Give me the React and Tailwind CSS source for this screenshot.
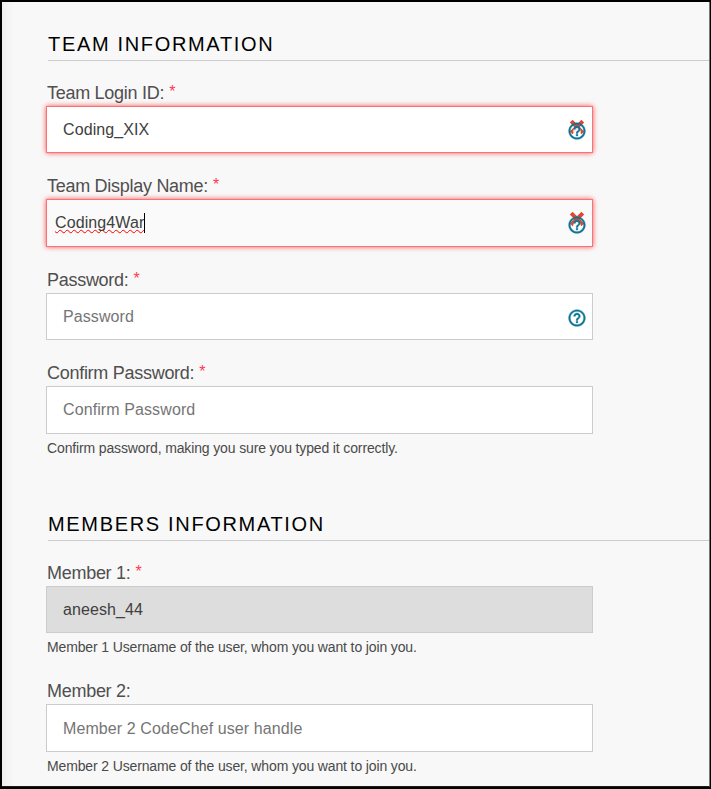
const HelpIcon = ({ className }) => (
  <svg viewBox="0 0 24 24" className={`absolute left-[520px] h-[20px] w-[20px] ${className}`}>
    <ellipse cx="12" cy="12.8" rx="4.6" ry="6" fill="#ffffff" fillOpacity="0.85" />
    <path
      fill="#0b7496"
      stroke="#0b7496"
      strokeWidth="0.5"
      d="M11 18h2v-2h-2v2zm1-16C6.48 2 2 6.48 2 12s4.48 10 10 10 10-4.48 10-10S17.52 2 12 2zm0 18c-4.41 0-8-3.59-8-8s3.59-8 8-8 8 3.59 8 8-3.59 8-8 8zm0-14c-2.21 0-4 1.79-4 4h2c0-1.1.9-2 2-2s2 .9 2 2c0 2-3 1.75-3 5h2c0-2.25 3-2.5 3-5 0-2.21-1.79-4-4-4z"
    />
  </svg>
);

const CrossIcon = ({ className }) => (
  <svg viewBox="0 0 16 16" className={`absolute left-[522px] h-[16px] w-[16px] ${className}`}>
    <path d="M2.2 2.2L13.8 13.8M13.8 2.2L2.2 13.8" stroke="#e0492f" strokeWidth="4" />
  </svg>
);

function Field({ label, required, className, box, text, textClass, help, children }) {
  return (
    <div className={className}>
      <label className="flex h-[25px] pl-px text-[18px] leading-6 tracking-[-0.28px] text-[#4f4f4f]">
        {label}
        {required && <span className="ml-[5px] text-[16px] leading-[22px] text-[#ff3b4e]">*</span>}
      </label>
      <div className={`relative flex w-[547px] items-start border pt-[13px] text-[16px] leading-5 tracking-[0.1px] ${box}`}>
        <span className={textClass}>{text}</span>
        {children}
      </div>
      {help && <p className="mt-[5px] h-5 pl-px text-[14px] leading-[19px] tracking-[-0.135px] text-[#4a4a4a]">{help}</p>}
    </div>
  );
}

const Heading = ({ children, className }) => (
  <h2 className={`ml-0.5 h-7 border-b border-[#cccccc] text-[20px] leading-[23px] tracking-[1.67px] whitespace-nowrap text-black ${className}`}>
    {children}
  </h2>
);

export default function App() {
  return (
    <div className="flex h-[789px] w-[711px] overflow-hidden border-t-2 border-r border-b-2 border-l-2 border-black bg-[#f8f8f8] font-['Liberation_Sans',Arial,sans-serif]">
      <div className="w-3 shrink-0 border-b border-[#1c1c1c] bg-linear-to-r from-[#eeeeee] to-[#f8f8f8]" />
      <main className="flex grow flex-col border-r border-b border-r-[#777777] border-b-[#1c1c1c] pl-8">
        <Heading className="mt-[31px]">TEAM INFORMATION</Heading>
        <Field
          label="Team Login ID:" required className="mt-5" text="Coding_XIX"
          box="h-[47px] border-[#f27579] bg-white shadow-[0_0_5px_#ff0000b0]" textClass="pl-4 text-[#404040]"
        >
          <CrossIcon className="top-[12px]" />
          <HelpIcon className="top-[14px]" />
        </Field>
        <Field
          label="Team Display Name:" required className="mt-[21px]" text="Coding4War"
          box="h-[48px] border-[#f27579] bg-[#fafafa] shadow-[0_0_5px_#ff0000b0]"
          textClass="ml-2 border-r border-black text-[#404040] underline decoration-[#ff0000] decoration-wavy decoration-[1.3px] underline-offset-[1px] [text-decoration-skip-ink:none]"
        >
          <CrossIcon className="top-[11px]" />
          <HelpIcon className="top-[15px]" />
        </Field>
        <Field
          label="Password:" required className="mt-[21px]" text="Password"
          box="h-[47px] border-[#cccccc] bg-white" textClass="pl-4 text-[#757575]"
        >
          <HelpIcon className="top-[14px]" />
        </Field>
        <Field
          label="Confirm Password:" required className="mt-[21px]" text="Confirm Password"
          box="h-[48px] border-[#cccccc] bg-white" textClass="pl-4 text-[#757575]"
          help="Confirm password, making you sure you typed it correctly."
        />
        <Heading className="mt-[54px]">MEMBERS INFORMATION</Heading>
        <Field
          label="Member 1:" required className="mt-5" text="aneesh_44"
          box="h-[47px] border-[#cccccc] bg-[#dddddd]" textClass="pl-4 text-[#404040]"
          help="Member 1 Username of the user, whom you want to join you."
        />
        <Field
          label="Member 2:" className="mt-[21px]" text="Member 2 CodeChef user handle"
          box="h-[48px] border-[#cccccc] bg-white" textClass="pl-4 pt-px text-[#757575]"
          help="Member 2 Username of the user, whom you want to join you."
        />
      </main>
    </div>
  );
}
